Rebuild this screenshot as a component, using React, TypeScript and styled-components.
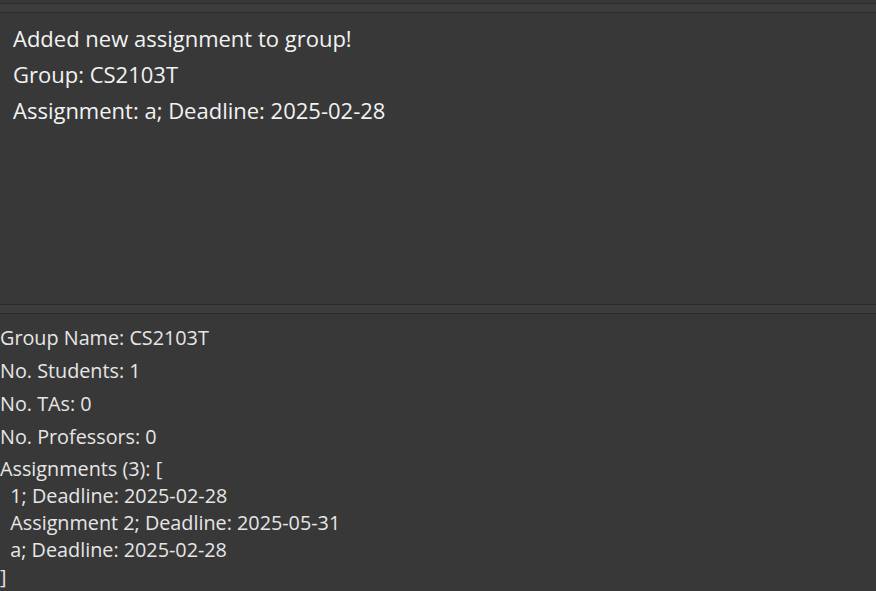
import React from "react";
import styled, { createGlobalStyle } from "styled-components";

const Global = createGlobalStyle`
  html, body { margin: 0; padding: 0; background: #383838; }
  body { font-family: "Open Sans", "Noto Sans", sans-serif; }
  #root { width: 876px; height: 591px; overflow: hidden; }
`;

const Window = styled.div`
  display: flex;
  flex-direction: column;
  width: 876px;
  height: 591px;
  background: #383838;
`;

const Divider = styled.div<{ $top: number }>`
  height: 8px;
  margin-top: ${(p) => p.$top}px;
  background: #3c3c3c;
  border-top: 1px solid #2b2b2b;
  border-bottom: 1px solid #2b2b2b;
  flex: none;
`;

const ResultPanel = styled.div`
  height: 291px;
  flex: none;
  padding: 7px 13px 0;
  box-sizing: border-box;
  color: #f2f2f2;
  font-size: 22px;
  line-height: 36px;
  white-space: pre;
`;

const ListPanel = styled.div`
  flex: 1;
  padding-top: 11px;
  color: #e6e6e6;
  font-size: 19.8px;
`;

const Field = styled.div`
  height: 33px;
  line-height: 26px;
  white-space: pre;
`;

const AssignBlock = styled.div`
  line-height: 27px;
  white-space: pre;
  margin-top: -2px;
`;

export default function App() {
  return (
    <Window>
      <Global />
      <Divider $top={3} />
      <ResultPanel>
        {"Added new assignment to group!\nGroup: CS2103T\nAssignment: a; Deadline: 2025-02-28"}
      </ResultPanel>
      <Divider $top={0} />
      <ListPanel>
        <Field>Group Name: CS2103T</Field>
        <Field>No. Students: 1</Field>
        <Field>No. TAs: 0</Field>
        <Field>No. Professors: 0</Field>
        <AssignBlock>
          {"Assignments (3): [\n  1; Deadline: 2025-02-28\n  Assignment 2; Deadline: 2025-05-31\n  a; Deadline: 2025-02-28\n]"}
        </AssignBlock>
      </ListPanel>
    </Window>
  );
}
